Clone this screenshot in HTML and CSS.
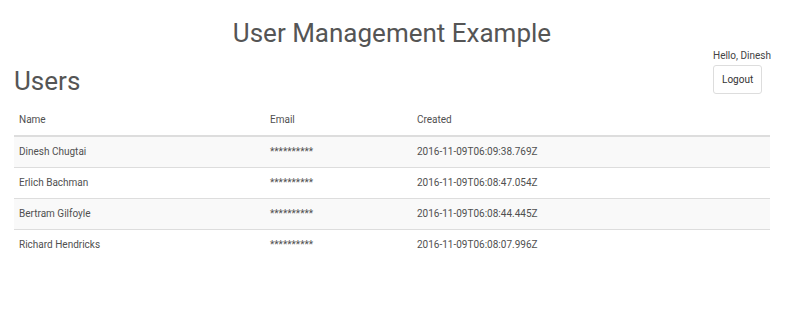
FILE: index.html
```html
<!DOCTYPE html>
<html lang="en">
<head>
  <meta charset="UTF-8" />
  <title>User Management Example</title>
  <link rel="stylesheet" href="styles.css">
</head>
<body>
  <div class="page">
    <h1 class="title">User Management Example</h1>

    <div class="toolbar">
      <h2 class="heading">Users</h2>
      <div class="account">
        <span class="greeting">Hello, Dinesh</span>
        <button class="btn" type="button">Logout</button>
      </div>
    </div>

    <table class="users">
      <thead>
        <tr>
          <th class="col-name">Name</th>
          <th class="col-email">Email</th>
          <th>Created</th>
        </tr>
      </thead>
      <tbody>
        <tr>
          <td>Dinesh Chugtai</td>
          <td>**********</td>
          <td>2016-11-09T06:09:38.769Z</td>
        </tr>
        <tr>
          <td>Erlich Bachman</td>
          <td>**********</td>
          <td>2016-11-09T06:08:47.054Z</td>
        </tr>
        <tr>
          <td>Bertram Gilfoyle</td>
          <td>**********</td>
          <td>2016-11-09T06:08:44.445Z</td>
        </tr>
        <tr>
          <td>Richard Hendricks</td>
          <td>**********</td>
          <td>2016-11-09T06:08:07.996Z</td>
        </tr>
      </tbody>
    </table>
  </div>
</body>
</html>
```

FILE: styles.css
```css
* {
  box-sizing: border-box;
}

body {
  margin: 0;
  font-family: Roboto, "Helvetica Neue", Arial, sans-serif;
  color: #555;
  background: #fff;
}

.page {
  padding: 0 30px 0 14px;
}

.title {
  margin: 0;
  padding-top: 16px;
  font-size: 26px;
  font-weight: 400;
  line-height: 34px;
  text-align: center;
  color: #555;
}

.toolbar {
  display: flex;
  justify-content: space-between;
  align-items: flex-end;
}

.heading {
  margin: 0 0 -2px;
  font-size: 26px;
  font-weight: 400;
  line-height: 30px;
  color: #555;
}

.account {
  display: flex;
  flex-direction: column;
  align-items: flex-start;
  gap: 3px;
  width: 57px;
}

.greeting {
  font-size: 10px;
  line-height: 12px;
  white-space: nowrap;
  color: #444;
}

.btn {
  height: 29px;
  padding: 0 8px;
  font-family: inherit;
  font-size: 10px;
  color: #333;
  background: #fff;
  border: 1px solid #ddd;
  border-radius: 3px;
}

.users {
  width: 100%;
  margin-top: 11px;
  border-collapse: collapse;
  font-size: 10px;
  line-height: 14px;
  color: #505050;
}

.users th,
.users td {
  padding: 8px 5px;
  text-align: left;
  font-weight: 400;
}

.users th {
  border-bottom: 2px solid #ddd;
}

.users td {
  border-top: 1px solid #ddd;
}

.users tbody tr:first-child td {
  border-top: 0;
}

.users tbody tr:nth-child(odd) {
  background: #f9f9f9;
}

.col-name {
  width: 251px;
}

.col-email {
  width: 147px;
}
```
